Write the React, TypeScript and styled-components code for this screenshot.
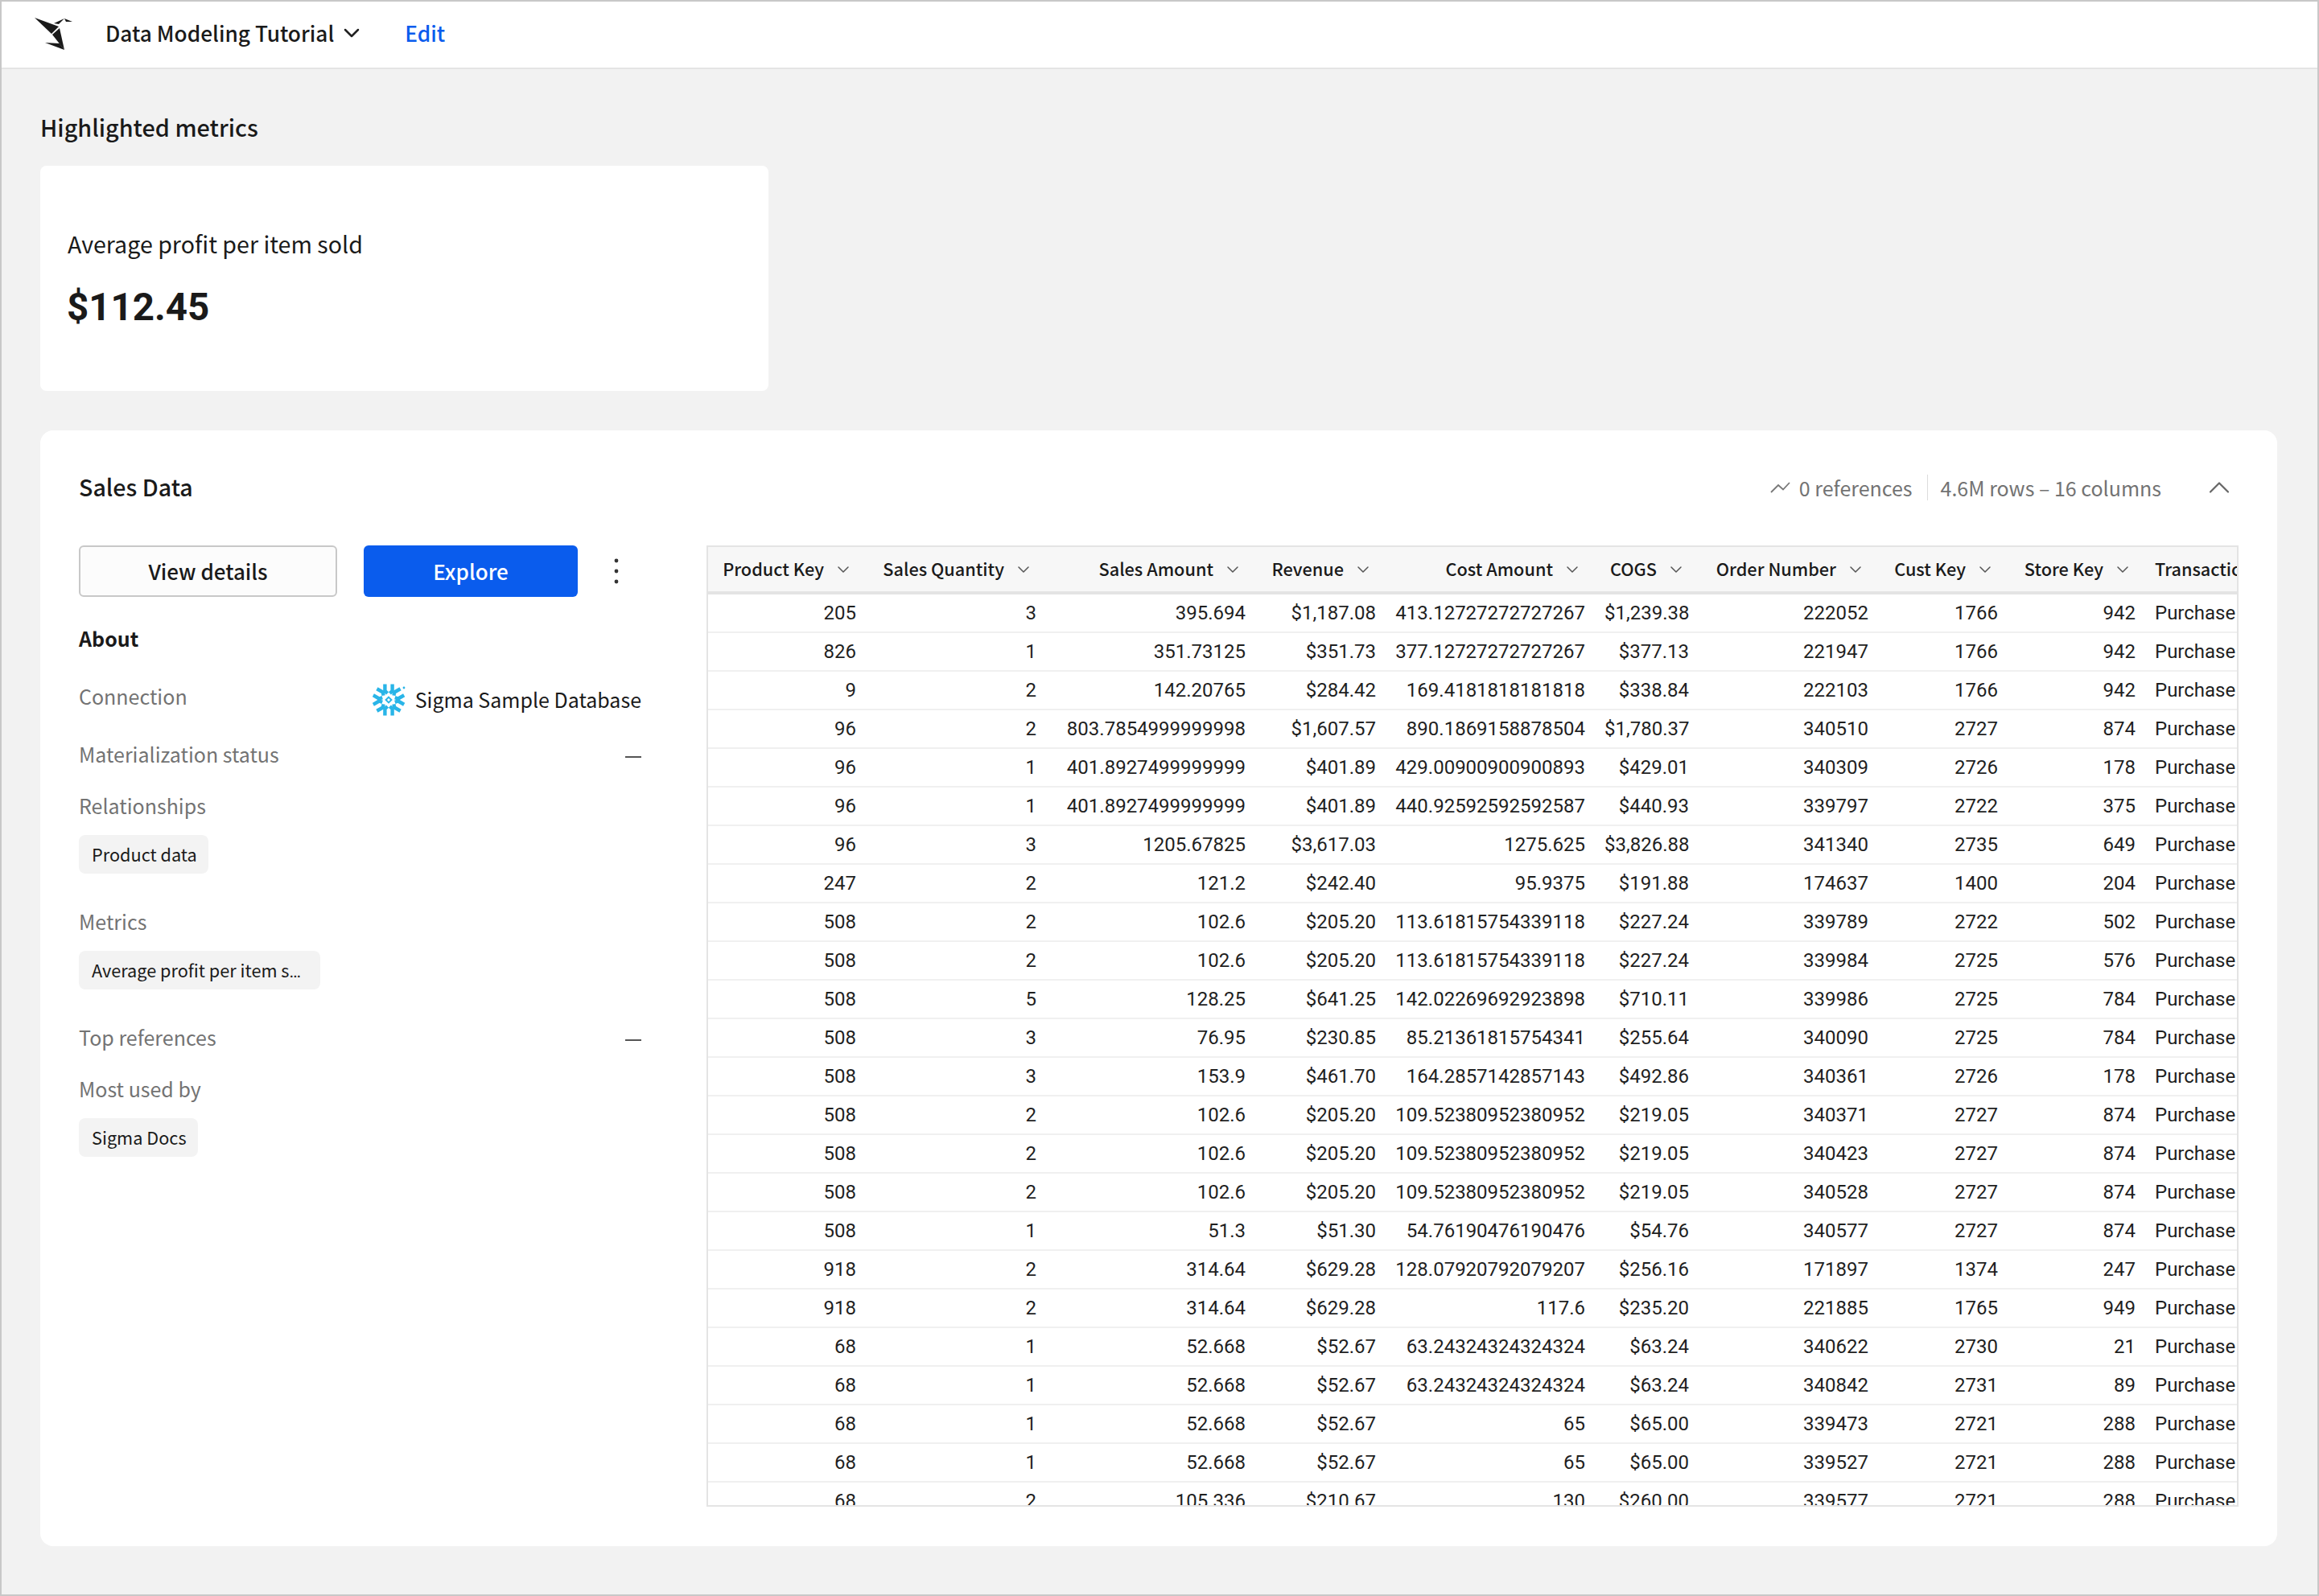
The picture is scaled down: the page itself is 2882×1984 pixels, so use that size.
import React from 'react';
import styled, { createGlobalStyle } from 'styled-components';
import { ChevronDown, ChevronUp } from 'lucide-react';

const sans = `"Noto Sans CJK SC", "Noto Sans CJK JP", "Noto Sans", sans-serif`;
const roboto = `Roboto, "Liberation Sans", sans-serif`;

const GlobalStyle = createGlobalStyle`
  html, body {
    margin: 0;
    padding: 0;
    background: #f2f2f2;
  }
  * {
    box-sizing: border-box;
  }
`;

const Page = styled.div`
  width: 2882px;
  height: 1984px;
  border: 2px solid #c8c8c8;
  background: #f2f2f2;
  font-family: ${sans};
  color: #1a1a1a;
  overflow: hidden;
`;

const TopBar = styled.header`
  height: 84px;
  background: #fff;
  border-bottom: 2px solid #e4e4e4;
  display: flex;
  align-items: center;
  padding: 0 0 5px 41px;
`;

const Logo = styled.svg`
  width: 47px;
  height: 41px;
  flex: none;
  margin-top: 4px;
`;

const DocTitle = styled.div`
  margin-left: 41px;
  font-size: 26.25px;
  font-weight: 500;
  white-space: nowrap;
`;

const TitleChevron = styled(ChevronDown)`
  margin-left: 6px;
  flex: none;
  color: #222;
`;

const EditLink = styled.a`
  margin-left: 50px;
  font-size: 26.25px;
  font-weight: 500;
  color: #0a5ced;
`;

const Main = styled.main`
  padding: 0 48px;
`;

const SectionTitle = styled.h2`
  margin: 49px 0 0;
  height: 46px;
  font-size: 28.8px;
  line-height: 46px;
  font-weight: 500;
`;

const MetricCard = styled.section`
  margin-top: 25px;
  width: 905px;
  height: 280px;
  background: #fff;
  border-radius: 8px;
  padding: 72px 33px 0;
`;

const MetricLabel = styled.div`
  margin-left: 1px;
  font-size: 28.6px;
  line-height: 50px;
`;

const MetricValue = styled.div`
  margin-top: 26px;
  font-family: ${roboto};
  font-size: 47.5px;
  line-height: 56px;
  font-weight: 700;
`;

const SalesCard = styled.section`
  margin-top: 49px;
  width: 2780px;
  height: 1387px;
  background: #fff;
  border-radius: 16px;
  padding: 48px 48px 0;
`;

const SalesHeader = styled.div`
  height: 46px;
  display: flex;
  align-items: center;
`;

const SalesTitle = styled.h3`
  margin: 0 0 3px;
  flex: 1;
  font-size: 28.6px;
  font-weight: 500;
`;

const SalesMeta = styled.span`
  font-size: 25px;
  color: #737373;
  white-space: nowrap;
`;

const MetaDivider = styled.span`
  width: 1px;
  height: 32px;
  margin: 0 16px 0 18px;
  background: #dcdcdc;
`;

const TrendIcon = styled.svg`
  width: 26px;
  height: 16px;
  margin-right: 10px;
  flex: none;
`;

const CollapseChevron = styled(ChevronUp)`
  margin-left: 50px;
  margin-right: 2px;
  color: #666;
  flex: none;
`;

const SalesBody = styled.div`
  margin-top: 49px;
  display: flex;
`;

const Sidebar = styled.aside`
  width: 699px;
  flex: none;
`;

const ButtonRow = styled.div`
  height: 64px;
  display: flex;
  align-items: center;
`;

const GhostButton = styled.button`
  width: 321px;
  height: 64px;
  padding: 0 0 1px;
  background: #fcfcfc;
  border: 2px solid #c8c8c8;
  border-radius: 6px;
  font-family: ${sans};
  font-size: 26px;
  font-weight: 500;
  color: #1a1a1a;
`;

const PrimaryButton = styled.button`
  width: 266px;
  height: 64px;
  padding: 0 0 1px;
  margin-left: 33px;
  background: #0a5ced;
  border: none;
  border-radius: 6px;
  font-family: ${sans};
  font-size: 26px;
  font-weight: 500;
  color: #fff;
`;

const Kebab = styled.svg`
  width: 8px;
  height: 34px;
  margin-left: 44px;
  flex: none;
`;

const AboutTitle = styled.div`
  margin-top: 35px;
  height: 36px;
  font-size: 25px;
  line-height: 32px;
  font-weight: 600;
`;

const FieldRow = styled.div<{ $top: number }>`
  margin-top: ${({ $top }) => $top}px;
  min-height: 36px;
  display: flex;
  justify-content: space-between;
  align-items: flex-start;
`;

const FieldLabel = styled.div`
  font-size: 25px;
  line-height: 32px;
  color: #737373;
`;

const EmptyDash = styled.span`
  width: 20px;
  height: 2px;
  margin-top: 19px;
  background: #555;
`;

const ConnectionValue = styled.div`
  display: flex;
  align-items: center;
  height: 40px;
  margin-top: 1px;
  font-size: 25px;
  white-space: nowrap;
`;

const ConnectionName = styled.span`
  padding-bottom: 2px;
`;

const SnowflakeIcon = styled.svg`
  width: 42px;
  height: 40px;
  margin-right: 11px;
  flex: none;
`;

const Pill = styled.div<{ $width: number }>`
  margin-top: 17px;
  width: ${({ $width }) => $width}px;
  height: 48px;
  padding-left: 16px;
  background: #f3f3f3;
  border-radius: 8px;
  font-size: 21.7px;
  line-height: 47px;
  white-space: nowrap;
`;

const PillEllipsis = styled.span`
  font-family: ${roboto};
`;

const Table = styled.div`
  margin-left: 81px;
  width: 1904px;
  height: 1195px;
  border: 2px solid #e4e4e4;
  overflow: hidden;
`;

const columns = '196px 224px 260px 162px 260px 129px 223px 161px 171px 120px';

const HeaderRow = styled.div`
  height: 59px;
  display: grid;
  grid-template-columns: ${columns};
  background: #f7f7f7;
  border-bottom: 4px solid #e4e4e4;
`;

const HeaderCell = styled.div<{ $left?: boolean }>`
  display: flex;
  align-items: center;
  justify-content: ${({ $left }) => ($left ? 'flex-start' : 'flex-end')};
  padding: ${({ $left }) => ($left ? '0 0 3px 12px' : '0 16px 3px 0')};
  font-size: 21.7px;
  font-weight: 500;
  white-space: nowrap;
  overflow: hidden;
`;

const HeaderChevron = styled(ChevronDown)`
  margin-left: 12px;
  margin-top: 3px;
  color: #555;
  flex: none;
`;

const DataRow = styled.div`
  height: 48px;
  display: grid;
  grid-template-columns: ${columns};
  border-bottom: 2px solid #f0f0f0;
`;

const DataCell = styled.div<{ $left?: boolean }>`
  padding: 0 12px;
  font-family: ${roboto};
  font-size: 24px;
  line-height: 46px;
  color: #1f1f1f;
  text-align: ${({ $left }) => ($left ? 'left' : 'right')};
  white-space: nowrap;
`;

const headers = [
  'Product Key',
  'Sales Quantity',
  'Sales Amount',
  'Revenue',
  'Cost Amount',
  'COGS',
  'Order Number',
  'Cust Key',
  'Store Key',
];

const rows = [
  ['205', '3', '395.694', '$1,187.08', '413.12727272727267', '$1,239.38', '222052', '1766', '942'],
  ['826', '1', '351.73125', '$351.73', '377.12727272727267', '$377.13', '221947', '1766', '942'],
  ['9', '2', '142.20765', '$284.42', '169.4181818181818', '$338.84', '222103', '1766', '942'],
  ['96', '2', '803.7854999999998', '$1,607.57', '890.1869158878504', '$1,780.37', '340510', '2727', '874'],
  ['96', '1', '401.8927499999999', '$401.89', '429.00900900900893', '$429.01', '340309', '2726', '178'],
  ['96', '1', '401.8927499999999', '$401.89', '440.92592592592587', '$440.93', '339797', '2722', '375'],
  ['96', '3', '1205.67825', '$3,617.03', '1275.625', '$3,826.88', '341340', '2735', '649'],
  ['247', '2', '121.2', '$242.40', '95.9375', '$191.88', '174637', '1400', '204'],
  ['508', '2', '102.6', '$205.20', '113.61815754339118', '$227.24', '339789', '2722', '502'],
  ['508', '2', '102.6', '$205.20', '113.61815754339118', '$227.24', '339984', '2725', '576'],
  ['508', '5', '128.25', '$641.25', '142.02269692923898', '$710.11', '339986', '2725', '784'],
  ['508', '3', '76.95', '$230.85', '85.21361815754341', '$255.64', '340090', '2725', '784'],
  ['508', '3', '153.9', '$461.70', '164.2857142857143', '$492.86', '340361', '2726', '178'],
  ['508', '2', '102.6', '$205.20', '109.52380952380952', '$219.05', '340371', '2727', '874'],
  ['508', '2', '102.6', '$205.20', '109.52380952380952', '$219.05', '340423', '2727', '874'],
  ['508', '2', '102.6', '$205.20', '109.52380952380952', '$219.05', '340528', '2727', '874'],
  ['508', '1', '51.3', '$51.30', '54.76190476190476', '$54.76', '340577', '2727', '874'],
  ['918', '2', '314.64', '$629.28', '128.07920792079207', '$256.16', '171897', '1374', '247'],
  ['918', '2', '314.64', '$629.28', '117.6', '$235.20', '221885', '1765', '949'],
  ['68', '1', '52.668', '$52.67', '63.24324324324324', '$63.24', '340622', '2730', '21'],
  ['68', '1', '52.668', '$52.67', '63.24324324324324', '$63.24', '340842', '2731', '89'],
  ['68', '1', '52.668', '$52.67', '65', '$65.00', '339473', '2721', '288'],
  ['68', '1', '52.668', '$52.67', '65', '$65.00', '339527', '2721', '288'],
  ['68', '2', '105.336', '$210.67', '130', '$260.00', '339577', '2721', '288'],
];

const BirdLogo = () => (
  <Logo viewBox="0 0 47 41" fill="#1a1a1a">
    <polygon points="0,0 30,11 21,20" />
    <polygon points="24,7 37,1 30,8" />
    <polygon points="37,1 47,5 39,5" />
    <polygon points="31,13 37,40 22,21" />
    <polygon points="13,31 31,32 37,40" />
  </Logo>
);

const Snowflake = () => (
  <SnowflakeIcon viewBox="0 0 42 40" fill="none" stroke="#29b5e8" strokeWidth="4.4">
    <g transform="translate(20 20)">
      {[0, 60, 120, 180, 240, 300].map((angle) => (
        <g key={angle} transform={`rotate(${angle})`}>
          <path d="M-4.6 -19.500 V-11 L-1.4 -8.2" />
          <path d="M4.6 -19.500 V-11 L1.400 -8.2" />
        </g>
      ))}
      <path d="M0 -3.400 L3.400 0 L0 3.400 L-3.400 0 Z" strokeWidth="2" />
    </g>
    <circle cx="39" cy="5" r="1.4" fill="#29b5e8" stroke="none" />
  </SnowflakeIcon>
);

export default function App() {
  return (
    <Page>
      <GlobalStyle />
      <TopBar>
        <BirdLogo />
        <DocTitle>Data Modeling Tutorial</DocTitle>
        <TitleChevron size={32} strokeWidth={1.9} />
        <EditLink>Edit</EditLink>
      </TopBar>
      <Main>
        <SectionTitle>Highlighted metrics</SectionTitle>
        <MetricCard>
          <MetricLabel>Average profit per item sold</MetricLabel>
          <MetricValue>$112.45</MetricValue>
        </MetricCard>
        <SalesCard>
          <SalesHeader>
            <SalesTitle>Sales Data</SalesTitle>
            <TrendIcon viewBox="0 0 26 16" fill="none" stroke="#777" strokeWidth="1.8">
              <path d="M1 14 L10 5 L16 10.500 L24 2" />
            </TrendIcon>
            <SalesMeta>0 references</SalesMeta>
            <MetaDivider />
            <SalesMeta>4.6M rows – 16 columns</SalesMeta>
            <CollapseChevron size={44} strokeWidth={1.2} />
          </SalesHeader>
          <SalesBody>
            <Sidebar>
              <ButtonRow>
                <GhostButton>View details</GhostButton>
                <PrimaryButton>Explore</PrimaryButton>
                <Kebab viewBox="0 0 8 34" fill="#333">
                  <circle cx="4" cy="4" r="2.4" />
                  <circle cx="4" cy="17" r="2.4" />
                  <circle cx="4" cy="30" r="2.4" />
                </Kebab>
              </ButtonRow>
              <AboutTitle>About</AboutTitle>
              <FieldRow $top={36}>
                <FieldLabel>Connection</FieldLabel>
                <ConnectionValue>
                  <Snowflake />
                  <ConnectionName>Sigma Sample Database</ConnectionName>
                </ConnectionValue>
              </FieldRow>
              <FieldRow $top={31}>
                <FieldLabel>Materialization status</FieldLabel>
                <EmptyDash />
              </FieldRow>
              <FieldRow $top={28}>
                <FieldLabel>Relationships</FieldLabel>
              </FieldRow>
              <Pill $width={161}>Product data</Pill>
              <FieldRow $top={43}>
                <FieldLabel>Metrics</FieldLabel>
              </FieldRow>
              <Pill $width={300}>
                Average profit per item s<PillEllipsis>…</PillEllipsis>
              </Pill>
              <FieldRow $top={43}>
                <FieldLabel>Top references</FieldLabel>
                <EmptyDash />
              </FieldRow>
              <FieldRow $top={28}>
                <FieldLabel>Most used by</FieldLabel>
              </FieldRow>
              <Pill $width={148}>Sigma Docs</Pill>
            </Sidebar>
            <Table>
              <HeaderRow>
                {headers.map((title) => (
                  <HeaderCell key={title}>
                    {title}
                    <HeaderChevron size={24} strokeWidth={1.5} />
                  </HeaderCell>
                ))}
                <HeaderCell $left>Transaction Type</HeaderCell>
              </HeaderRow>
              {rows.map((row, index) => (
                <DataRow key={index}>
                  {row.map((value, column) => (
                    <DataCell key={column}>{value}</DataCell>
                  ))}
                  <DataCell $left>Purchase</DataCell>
                </DataRow>
              ))}
            </Table>
          </SalesBody>
        </SalesCard>
      </Main>
    </Page>
  );
}
